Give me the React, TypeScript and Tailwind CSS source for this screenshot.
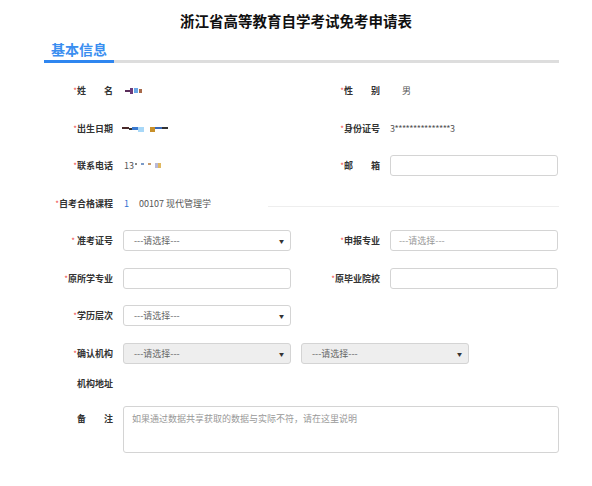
import type { ReactNode } from "react";

const font = { fontFamily: '"Noto Sans CJK SC", "Noto Sans", sans-serif' };

function Label({ children, star = true, space = false }: { children: ReactNode; star?: boolean; space?: boolean }) {
  return (
    <div className="w-[69px] shrink-0 text-right text-[9px] font-bold leading-none text-[#333]">
      {star && <span className="text-[8px] font-normal text-[#f04848]">*</span>}
      {space && " "}
      {children}
    </div>
  );
}

function RightLabel({ children, star = true }: { children: ReactNode; star?: boolean }) {
  return (
    <div className="ml-[10px] w-[79px] shrink-0 text-right text-[9px] font-bold leading-none text-[#333]">
      {star && <span className="text-[8px] font-normal text-[#f04848]">*</span>}
      {children}
    </div>
  );
}

// left value area spans from the label's end to the right-hand label (x 113 → 291)
function Value({ children, pl }: { children: ReactNode; pl: string }) {
  return <div className={`flex w-[178px] shrink-0 items-center ${pl}`}>{children}</div>;
}

function Select({ disabled = false }: { disabled?: boolean }) {
  return (
    <div
      className={`ml-[10px] flex h-[21px] w-[168px] shrink-0 items-center justify-between rounded-[3px] border border-[#d4d4d4] pl-[10px] pr-[6px] ${
        disabled ? "bg-[#eeeeee]" : "bg-white"
      }`}
    >
      <span className="text-[9px] leading-none text-[#666]">---请选择---</span>
      <span className="text-[5px] leading-none text-[#333]">▼</span>
    </div>
  );
}

function Input({ placeholder }: { placeholder?: string }) {
  return (
    <div className="ml-[10px] flex h-[21px] w-[168px] shrink-0 items-center rounded-[3px] border border-[#d4d4d4] bg-white pl-[8px]">
      {placeholder && <span className="text-[9px] leading-none text-[#999]">{placeholder}</span>}
    </div>
  );
}

function Row({ children }: { children: ReactNode }) {
  return <div className="flex h-[37.5px] items-center">{children}</div>;
}

export default function App() {
  return (
    <div className="h-[486px] w-[592px] overflow-hidden bg-white" style={font}>
      <h1 className="pt-[12px] text-center text-[14.5px] font-bold leading-[18px] text-[#111]">
        浙江省高等教育自学考试免考申请表
      </h1>

      <div className="ml-[44px] w-[515px]">
        <div className="mt-[11px] flex border-b-[3px] border-[#dddddd]">
          <div className="-mb-[3px] w-[70px] border-b-[3px] border-[#2f86f0] pb-[3px] pl-[7px] text-[14px] font-bold leading-[16px] text-[#3a8ef0]">
            基本信息
          </div>
        </div>

        <div className="mt-[9px]">
          <Row>
            <Label>姓&#12288;&#12288;名</Label>
            <Value pl="pl-[12px]">
              <span className="h-[2px] w-[5px] bg-[#5a2d5a]" />
              <span className="h-[6px] w-[3px] bg-[#6a3a7a]" />
              <span className="ml-[1px] h-[5px] w-[4px] bg-[#6aa8e8]" />
              <span className="ml-[1px] h-[4px] w-[3px] bg-[#a86a4a]" />
            </Value>
            <RightLabel>性&#12288;&#12288;别</RightLabel>
            <span className="ml-[22px] text-[9px] leading-none text-[#555]">男</span>
          </Row>
          <Row>
            <Label>出生日期</Label>
            <Value pl="pl-[9px]">
              <span className="h-[2px] w-[7px] bg-[#4a2a2a]" />
              <span className="mt-[1px] h-[2px] w-[3px] bg-[#333]" />
              <span className="h-[3px] w-[6px] bg-[#3a7ad0]" />
              <span className="mt-[3px] h-[5px] w-[6px] bg-[#a8d8f8]" />
              <span className="ml-[6px] mt-[3px] h-[5px] w-[5px] bg-[#c8902a]" />
              <span className="h-[2px] w-[7px] bg-[#3a6ab8]" />
              <span className="h-[2px] w-[6px] bg-[#333]" />
            </Value>
            <RightLabel>身份证号</RightLabel>
            <span className="ml-[10px] text-[9px] leading-none tracking-[-0.5px] text-[#555]">3***************3</span>
          </Row>
          <Row>
            <Label>联系电话</Label>
            <Value pl="pl-[11px]">
              <span className="text-[9px] leading-none text-[#555]">13</span>
              <span className="ml-[1px] mb-[3px] h-[2px] w-[2px] bg-[#888]" />
              <span className="ml-[4px] mb-[3px] h-[2px] w-[3px] bg-[#7a9ac8]" />
              <span className="ml-[4px] mb-[3px] h-[2px] w-[3px] bg-[#c89a6a]" />
              <span className="ml-[4px] h-[5px] w-[3px] bg-[#b8b8d8]" />
              <span className="h-[5px] w-[3px] bg-[#e0b860]" />
            </Value>
            <RightLabel>邮&#12288;&#12288;箱</RightLabel>
            <Input />
          </Row>
          <Row>
            <Label>自考合格课程</Label>
            <span className="ml-[11px] text-[9px] leading-none text-[#2f6fd0]">1</span>
            <span className="ml-[10px] text-[9px] leading-none text-[#555]">00107 现代管理学</span>
            <div className="ml-auto mt-[6px] w-[291px] border-t border-[#eeeeee]" />
          </Row>
          <Row>
            <Label space>准考证号</Label>
            <Select />
            <RightLabel>申报专业</RightLabel>
            <Input placeholder="---请选择---" />
          </Row>
          <Row>
            <Label>原所学专业</Label>
            <Input />
            <RightLabel>原毕业院校</RightLabel>
            <Input />
          </Row>
          <Row>
            <Label>学历层次</Label>
            <Select />
          </Row>
          <Row>
            <Label>确认机构</Label>
            <Select disabled />
            <Select disabled />
          </Row>
          <div className="flex h-[23px] items-center">
            <Label star={false}>机构地址</Label>
          </div>
          <div className="mt-[11px] flex items-start">
            <div className="pt-[8px]">
              <Label star={false}>备&#12288;&#12288;注</Label>
            </div>
            <div className="ml-[10px] h-[47px] w-[436px] rounded-[3px] border border-[#d4d4d4] bg-white px-[8px] pt-[7px] text-[9px] leading-none text-[#999]">
              如果通过数据共享获取的数据与实际不符，请在这里说明
            </div>
          </div>
        </div>
      </div>
    </div>
  );
}
